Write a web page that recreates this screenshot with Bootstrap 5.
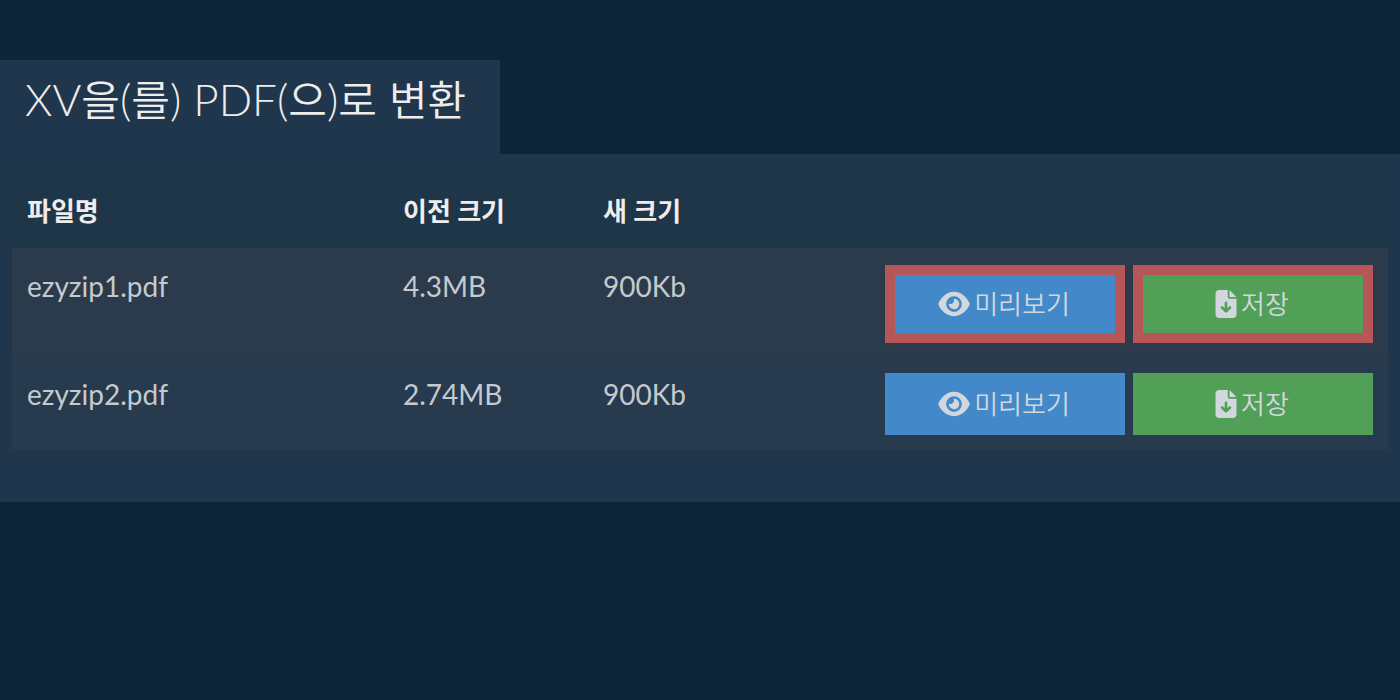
<!DOCTYPE html>
<html lang="ko">
<head>
<meta charset="utf-8">
<meta name="viewport" content="width=device-width, initial-scale=1">
<title>XV을(를) PDF(으)로 변환</title>
<link href="https://cdn.jsdelivr.net/npm/bootstrap@5.3.0/dist/css/bootstrap.min.css" rel="stylesheet">
<style>
  body { background: #0e2437; color: #ededed; font-family: Lato, "Noto Sans CJK KR", sans-serif; padding-top: 60px; }
  .tab-title { background: #20364c; padding: 13px 34px 29px 25px; }
  .tab-title h1 { font-size: 44px; line-height: 52px; font-weight: 300; }
  .ko-title { font-family: "Noto Sans CJK KR DemiLight", "Noto Sans CJK KR", sans-serif; font-size: 42px; line-height: 1; font-weight: 350; }
  .panel { background: #20364c; padding: 20px 12px 52px; }
  .files { --bs-table-bg: transparent; --bs-table-color: #c5cacf; font-size: 28px; line-height: 42px; table-layout: fixed; }
  .files > :not(caption) > * > * { padding: 15px; border: 0; color: #c5cacf; }
  .files > thead > tr > th { background: #1f3548; color: #ededed; font-size: 26px; line-height: 44px; font-weight: 700; }
  .files > tbody > tr > td { background: #273a4e; line-height: 48px; }
  .files > tbody > tr.current > td { background: #2b3b4c; border-top: 2px solid #2b3b4c; }
  .files .name-col { width: 376px; }
  .files .size-col { width: 200px; }
  .files .action-col { width: 518px; }
  .files .cell-text { display: block; margin-top: -3px; }
  .file-btn { width: 240px; height: 62px; border: 0; border-radius: 0; color: #d1d7dc; font-family: Lato, "Noto Sans CJK KR DemiLight", "Noto Sans CJK KR", sans-serif; font-size: 26px; line-height: 38px; font-weight: 350; padding: 0 2px 0 0; }
  .file-btn:hover { color: #fff; }
  .preview { background: #4388c9; }
  .save { background: #529f58; }
  .preview:hover { background: #3a7cba; }
  .save:hover { background: #488f4e; }
  .current .file-btn { height: 78px; border: 10px solid #b75658; }
  .file-btn svg { height: 28px; fill: currentColor; flex: none; }
</style>
</head>
<body>
<svg class="d-none" aria-hidden="true">
  <symbol id="eye" viewBox="0 0 576 512"><path d="M288 32c-80.8 0-145.5 36.8-192.6 80.6C48.6 156 17.3 208 2.5 243.7c-3.3 7.9-3.3 16.7 0 24.6C17.3 304 48.6 356 95.4 399.4C142.5 443.2 207.2 480 288 480s145.5-36.8 192.6-80.6c46.8-43.5 78.1-95.4 93-131.1c3.3-7.9 3.3-16.7 0-24.6c-14.9-35.7-46.2-87.7-93-131.1C433.5 68.8 368.8 32 288 32zM144 256a144 144 0 1 1 288 0 144 144 0 1 1 -288 0zm144-64c0 35.3-28.7 64-64 64c-7.1 0-13.9-1.2-20.3-3.3c-5.5-1.8-11.9 1.6-11.7 7.4c.3 6.9 1.3 13.8 3.2 20.7c13.7 51.2 66.4 81.6 117.6 67.9s81.6-66.4 67.9-117.6c-11.1-41.5-47.8-69.4-88.6-71.1c-5.8-.2-9.2 6.1-7.4 11.7c2.1 6.4 3.3 13.2 3.3 20.3z"/></symbol>
  <symbol id="file-down" viewBox="0 0 384 512"><path d="M64 0C28.7 0 0 28.7 0 64V448c0 35.3 28.7 64 64 64H320c35.3 0 64-28.7 64-64V160H256c-17.7 0-32-14.3-32-32V0H64zM256 0V128H384L256 0zM216 232V334.1l31-31c9.4-9.4 24.6-9.4 33.9 0s9.4 24.6 0 33.9l-72 72c-9.4 9.4-24.6 9.4-33.9 0l-72-72c-9.4-9.4-9.4-24.6 0-33.9s24.6-9.4 33.9 0l31 31V232c0-13.3 10.7-24 24-24s24 10.7 24 24z"/></symbol>
</svg>
<main>
  <div class="tab-title d-inline-block align-top">
    <h1 class="m-0 text-nowrap">XV<span class="ko-title">을</span>(<span class="ko-title">를</span>) PDF(<span class="ko-title">으</span>)<span class="ko-title">로</span> <span class="ko-title">변환</span></h1>
  </div>
  <section class="panel">
    <table class="table files m-0">
      <colgroup><col class="name-col"><col class="size-col"><col><col class="action-col"></colgroup>
      <thead>
        <tr><th scope="col">파일명</th><th scope="col">이전 크기</th><th scope="col">새 크기</th><th></th></tr>
      </thead>
      <tbody>
        <tr class="current">
          <td><span class="cell-text">ezyzip1.pdf</span></td>
          <td><span class="cell-text">4.3MB</span></td>
          <td><span class="cell-text">900Kb</span></td>
          <td>
            <div class="d-flex justify-content-end gap-2">
              <button type="button" class="btn file-btn preview d-flex align-items-center justify-content-center gap-1"><svg width="32" aria-hidden="true"><use href="#eye"/></svg>미리보기</button>
              <button type="button" class="btn file-btn save d-flex align-items-center justify-content-center gap-1"><svg width="22" aria-hidden="true"><use href="#file-down"/></svg>저장</button>
            </div>
          </td>
        </tr>
        <tr>
          <td><span class="cell-text">ezyzip2.pdf</span></td>
          <td><span class="cell-text">2.74MB</span></td>
          <td><span class="cell-text">900Kb</span></td>
          <td>
            <div class="d-flex justify-content-end gap-2">
              <button type="button" class="btn file-btn preview d-flex align-items-center justify-content-center gap-1"><svg width="32" aria-hidden="true"><use href="#eye"/></svg>미리보기</button>
              <button type="button" class="btn file-btn save d-flex align-items-center justify-content-center gap-1"><svg width="22" aria-hidden="true"><use href="#file-down"/></svg>저장</button>
            </div>
          </td>
        </tr>
      </tbody>
    </table>
  </section>
</main>
<script src="https://cdn.jsdelivr.net/npm/bootstrap@5.3.0/dist/js/bootstrap.bundle.min.js"></script>
</body>
</html>
